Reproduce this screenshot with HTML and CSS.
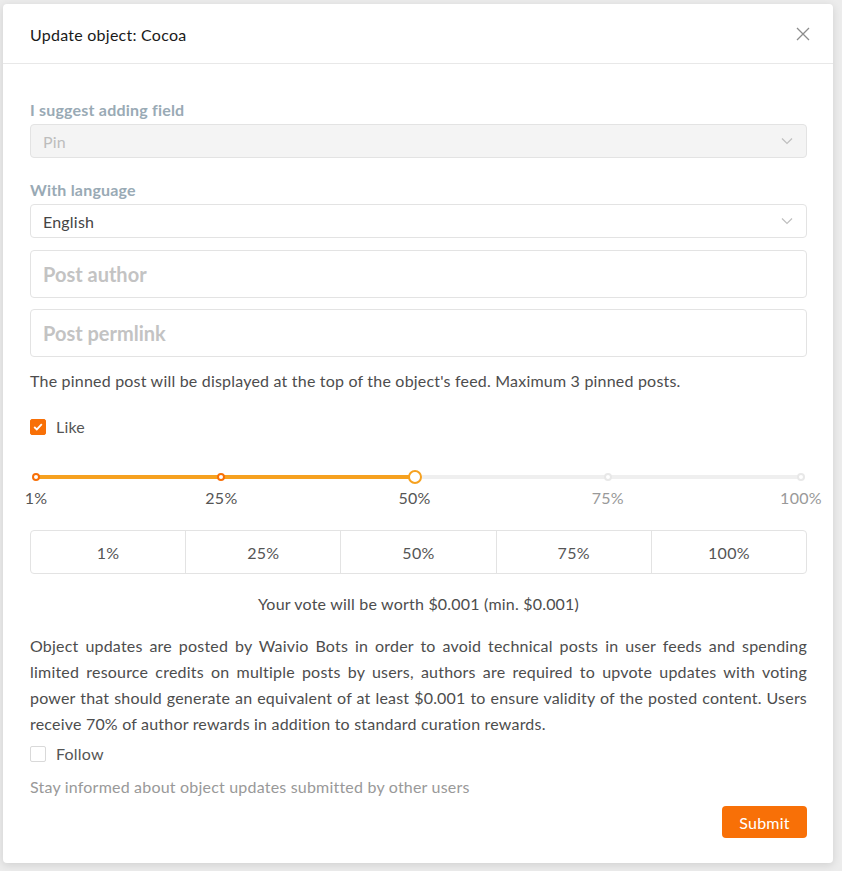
FILE: index.html
```html
<!DOCTYPE html>
<html>
<head>
<meta charset="utf-8">
<link rel="stylesheet" href="styles.css">
</head>
<body>
<div class="modal">
  <div class="modal-header">
    <div class="modal-title">Update object: Cocoa</div>
    <svg class="close" width="14" height="14" viewBox="0 0 14 14"><path d="M1 1L13 13M13 1L1 13" stroke="#8c8c8c" stroke-width="1.3" fill="none"/></svg>
  </div>
  <div class="modal-body">
    <div class="label">I suggest adding field</div>
    <div class="select disabled">
      <span>Pin</span>
      <svg class="chev" width="12" height="8" viewBox="0 0 12 8"><path d="M1 1.5L6 6.5L11 1.5" stroke="#bfbfbf" stroke-width="1.2" fill="none"/></svg>
    </div>
    <div class="label label2">With language</div>
    <div class="select">
      <span>English</span>
      <svg class="chev" width="12" height="8" viewBox="0 0 12 8"><path d="M1 1.5L6 6.5L11 1.5" stroke="#bfbfbf" stroke-width="1.2" fill="none"/></svg>
    </div>
    <div class="input first">Post author</div>
    <div class="input second">Post permlink</div>
    <div class="helper">The pinned post will be displayed at the top of the object's feed. Maximum 3 pinned posts.</div>
    <label class="check like">
      <span class="box checked"><svg width="10" height="8" viewBox="0 0 10 8"><path d="M1.2 4L3.8 6.4L8.8 1.2" stroke="#fff" stroke-width="1.8" fill="none"/></svg></span>
      <span>Like</span>
    </label>
    <div class="slider">
      <div class="rail"></div>
      <div class="track"></div>
      <span class="dot active" style="left:0%"></span>
      <span class="dot active" style="left:24.24%"></span>
      <span class="dot" style="left:74.75%"></span>
      <span class="dot" style="left:100%"></span>
      <span class="handle" style="left:49.49%"></span>
      <span class="mark" style="left:0%">1%</span>
      <span class="mark" style="left:24.24%">25%</span>
      <span class="mark" style="left:49.49%">50%</span>
      <span class="mark dim" style="left:74.75%">75%</span>
      <span class="mark dim" style="left:100%">100%</span>
    </div>
    <div class="btn-group">
      <div class="btn">1%</div>
      <div class="btn">25%</div>
      <div class="btn">50%</div>
      <div class="btn">75%</div>
      <div class="btn">100%</div>
    </div>
    <div class="vote">Your vote will be worth $0.001 (min. $0.001)</div>
    <p class="info">Object updates are posted by Waivio Bots in order to avoid technical posts in user feeds and spending limited resource credits on multiple posts by users, authors are required to upvote updates with voting power that should generate an equivalent of at least $0.001 to ensure validity of the posted content. Users receive 70% of author rewards in addition to standard curation rewards.</p>
    <label class="check follow">
      <span class="box"></span>
      <span>Follow</span>
    </label>
    <div class="stay">Stay informed about object updates submitted by other users</div>
    <div class="footer">
      <button class="submit">Submit</button>
    </div>
  </div>
</div>
</body>
</html>
```

FILE: styles.css
```css
html, body {
  margin: 0;
  padding: 0;
}
body {
  background: #ececec;
  font-family: "Lato", "Open Sans", sans-serif;
  color: #333;
  width: 842px;
  height: 871px;
  overflow: hidden;
}
.modal {
  margin: 4px 0 0 3px;
  width: 830px;
  height: 859px;
  background: #fff;
  border-radius: 4px;
  box-shadow: 0 2px 8px rgba(0, 0, 0, 0.12);
  box-sizing: border-box;
}
.modal-header {
  height: 60px;
  padding: 0 23px 0 27px;
  display: flex;
  align-items: center;
  justify-content: space-between;
  border-bottom: 1px solid #e8e8e8;
  box-sizing: border-box;
}
.modal-title {
  font-size: 16px;
  letter-spacing: 0.25px;
  color: #1a1a1a;
  padding-top: 2px;
}
.close {
  display: block;
  margin-top: 1px;
}
.modal-body {
  padding: 35px 26px 0 27px;
}
.label {
  font-size: 16px;
  letter-spacing: 0.2px;
  font-weight: 700;
  color: #99aab5;
  line-height: 22px;
}
.label2 {
  margin-top: 21px;
}
.select {
  margin-top: 3px;
  height: 34px;
  border: 1px solid #e3e3e3;
  border-radius: 4px;
  box-sizing: border-box;
  display: flex;
  align-items: center;
  justify-content: space-between;
  padding: 0 13px 0 12px;
  font-size: 16px;
  letter-spacing: 0.2px;
  color: #444;
}
.select.disabled {
  background: #f4f4f4;
  color: #bdbdbd;
}
.chev {
  display: block;
}
.input {
  height: 48px;
  border: 1px solid #e3e3e3;
  border-radius: 4px;
  box-sizing: border-box;
  padding: 0 12px;
  display: flex;
  align-items: center;
  font-size: 20px;
  font-weight: 700;
  color: #c3c3c3;
}
.input.first {
  margin-top: 12px;
}
.input.second {
  margin-top: 11px;
}
.helper {
  margin-top: 13px;
  font-size: 16px;
  letter-spacing: 0.2px;
  line-height: 22px;
  color: #4d4d4d;
}
.check {
  display: flex;
  align-items: center;
  font-size: 16px;
  letter-spacing: 0.2px;
  line-height: 22px;
  color: #555;
}
.check .box {
  width: 16px;
  height: 16px;
  border-radius: 2px;
  border: 1px solid #d9d9d9;
  box-sizing: border-box;
  margin-right: 10px;
  display: flex;
  align-items: center;
  justify-content: center;
  background: #fff;
}
.check .box.checked {
  background: #f87007;
  border-color: #f87007;
}
.like {
  margin-top: 24px;
}
.slider {
  position: relative;
  margin: 26px 0 0 6px;
  width: 765px;
  height: 40px;
}
.rail {
  position: absolute;
  left: 0;
  right: 0;
  top: 11px;
  height: 4px;
  border-radius: 2px;
  background: #efefef;
}
.track {
  position: absolute;
  left: 0;
  width: 49.49%;
  top: 11px;
  height: 4px;
  border-radius: 2px;
  background: #f6a11f;
}
.dot {
  position: absolute;
  top: 9px;
  width: 8px;
  height: 8px;
  margin-left: -4px;
  border-radius: 50%;
  border: 2px solid #e8e8e8;
  background: #fff;
  box-sizing: border-box;
}
.dot.active {
  border-color: #f87007;
}
.handle {
  position: absolute;
  top: 6px;
  width: 14px;
  height: 14px;
  margin-left: -7px;
  border-radius: 50%;
  border: 2px solid #f6a11f;
  background: #fff;
  box-sizing: border-box;
}
.mark {
  position: absolute;
  top: 24px;
  transform: translateX(-50%);
  font-size: 16px;
  letter-spacing: 0.3px;
  line-height: 20px;
  color: #555;
}
.mark.dim {
  color: #999;
}
.btn-group {
  margin-top: 26px;
  display: flex;
  height: 44px;
  border: 1px solid #e3e3e3;
  border-radius: 4px;
  box-sizing: border-box;
}
.btn {
  flex: 1;
  display: flex;
  align-items: center;
  justify-content: center;
  font-size: 16px;
  letter-spacing: 0.3px;
  color: #555;
  border-left: 1px solid #e3e3e3;
}
.btn:first-child {
  border-left: none;
}
.vote {
  margin-top: 19px;
  text-align: center;
  font-size: 16px;
  letter-spacing: 0.2px;
  line-height: 22px;
  color: #4d4d4d;
}
.info {
  margin: 18px 0 0;
  font-size: 16px;
  letter-spacing: 0.2px;
  line-height: 26px;
  text-align: justify;
  color: #4d4d4d;
}
.follow {
  margin-top: 6px;
}
.stay {
  margin-top: 11px;
  font-size: 16px;
  letter-spacing: 0.2px;
  line-height: 22px;
  color: #999;
}
.footer {
  margin-top: 8px;
  display: flex;
  justify-content: flex-end;
}
.submit {
  width: 85px;
  height: 32px;
  background: #f87007;
  border: none;
  border-radius: 4px;
  color: #fff;
  font-family: "Lato", sans-serif;
  font-size: 16px;
  letter-spacing: 0.2px;
  padding: 0;
}
```
